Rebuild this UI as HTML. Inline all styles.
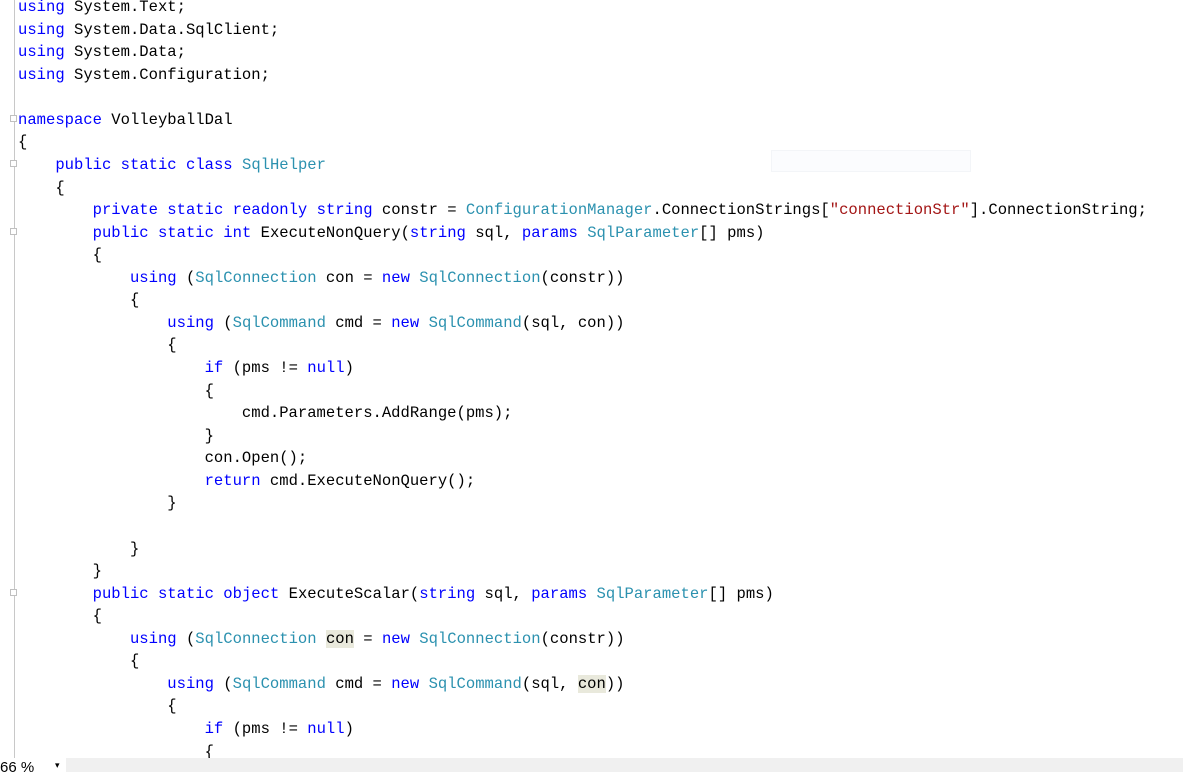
<!DOCTYPE html>
<html><head><meta charset="utf-8"><style>
html,body{margin:0;padding:0;background:#fff;width:1183px;height:772px;overflow:hidden;position:relative}
#code{position:absolute;left:18px;top:-4px;font-family:"Liberation Mono","Noto Sans CJK SC",monospace;font-size:15.55px;line-height:22.57px;white-space:pre;color:#000}
.k{color:#0000ff}.t{color:#2b91af}.s{color:#a31515}.h{background:#e9e9dc}
.vl{position:absolute;left:14px;top:0;width:1px;height:758px;background:#c8c8c8}
.fold{position:absolute;left:10px;width:7px;height:7px;border:1px solid #c0c0c0;background:#fff;box-sizing:border-box}
#bar{position:absolute;left:0;top:758px;width:1183px;height:14px;background:#f0f0f0}
#zoom{position:absolute;left:0;top:758px;width:66px;height:14px;background:#fff;font-family:"Liberation Sans",sans-serif;font-size:15px;line-height:20px;color:#000;overflow:hidden}
#tip{position:absolute;left:771px;top:150px;width:198px;height:20px;background:#fbfcfe;border:1px solid #f3f5f8}
</style></head><body>
<div class="vl"></div>
<div class="fold" style="top:115px"></div>
<div class="fold" style="top:160px"></div>
<div class="fold" style="top:228px"></div>
<div class="fold" style="top:589px"></div>
<div id="tip"></div>
<div id="code"><span class="k">using</span> System.Text;
<span class="k">using</span> System.Data.SqlClient;
<span class="k">using</span> System.Data;
<span class="k">using</span> System.Configuration;

<span class="k">namespace</span> VolleyballDal
{
    <span class="k">public</span> <span class="k">static</span> <span class="k">class</span> <span class="t">SqlHelper</span>
    {
        <span class="k">private</span> <span class="k">static</span> <span class="k">readonly</span> <span class="k">string</span> constr = <span class="t">ConfigurationManager</span>.ConnectionStrings[<span class="s">"connectionStr"</span>].ConnectionString;
        <span class="k">public</span> <span class="k">static</span> <span class="k">int</span> ExecuteNonQuery(<span class="k">string</span> sql, <span class="k">params</span> <span class="t">SqlParameter</span>[] pms)
        {
            <span class="k">using</span> (<span class="t">SqlConnection</span> con = <span class="k">new</span> <span class="t">SqlConnection</span>(constr))
            {
                <span class="k">using</span> (<span class="t">SqlCommand</span> cmd = <span class="k">new</span> <span class="t">SqlCommand</span>(sql, con))
                {
                    <span class="k">if</span> (pms != <span class="k">null</span>)
                    {
                        cmd.Parameters.AddRange(pms);
                    }
                    con.Open();
                    <span class="k">return</span> cmd.ExecuteNonQuery();
                }

            }
        }
        <span class="k">public</span> <span class="k">static</span> <span class="k">object</span> ExecuteScalar(<span class="k">string</span> sql, <span class="k">params</span> <span class="t">SqlParameter</span>[] pms)
        {
            <span class="k">using</span> (<span class="t">SqlConnection</span> <span class="h">con</span> = <span class="k">new</span> <span class="t">SqlConnection</span>(constr))
            {
                <span class="k">using</span> (<span class="t">SqlCommand</span> cmd = <span class="k">new</span> <span class="t">SqlCommand</span>(sql, <span class="h">con</span>))
                {
                    <span class="k">if</span> (pms != <span class="k">null</span>)
                    {
</div>
<div id="bar"></div>
<div id="zoom">66 % <span style="position:absolute;left:55px;top:-3px;font-size:9px">▾</span></div>
</body></html>
